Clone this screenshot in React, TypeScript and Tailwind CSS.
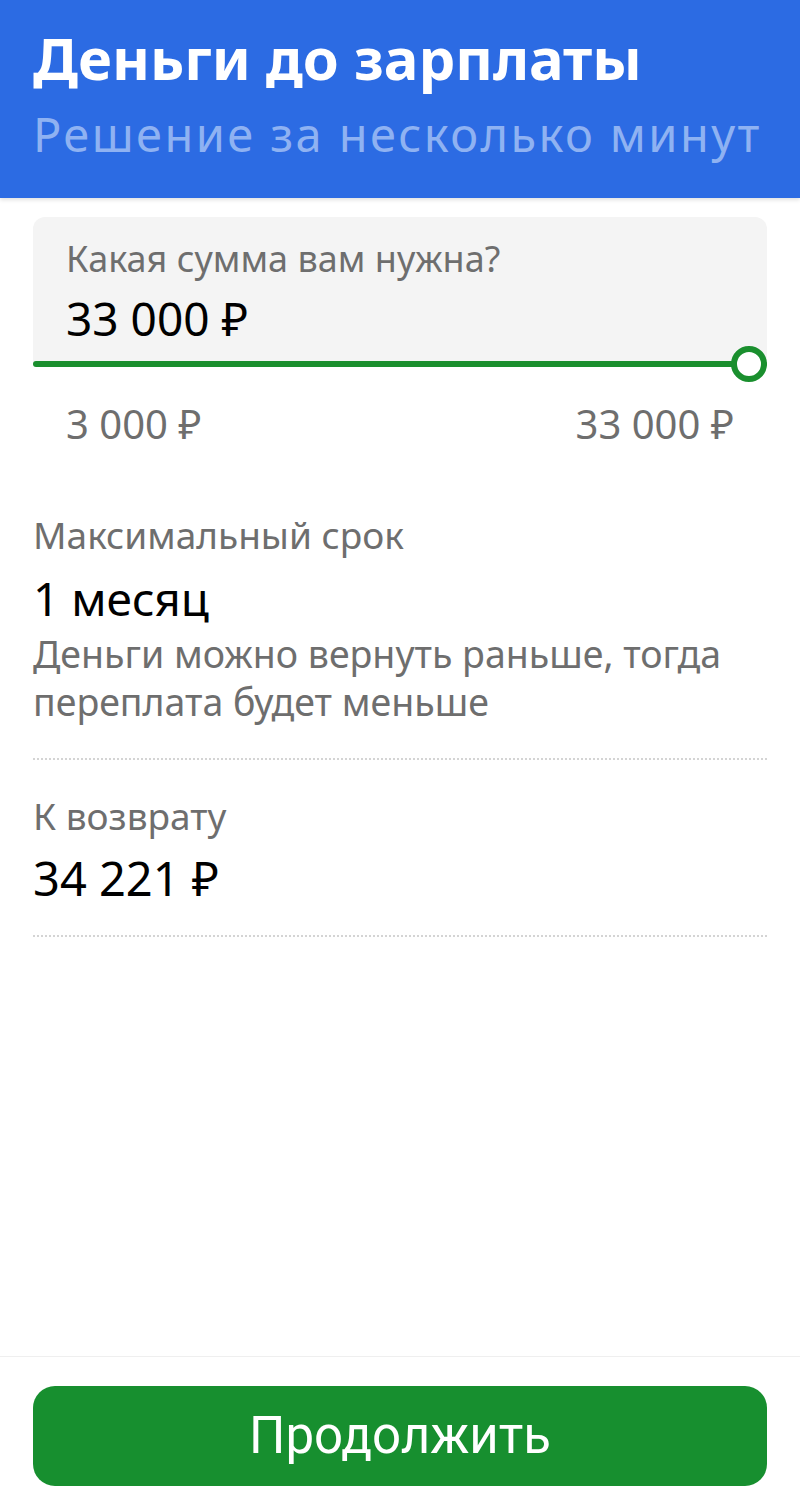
import React from 'react';

const Dotted: React.FC = () => (
    <div className="h-0 border-t-2 border-dotted border-[#d4d4d4]" />
);

const App: React.FC = () => {
    return (
        <div className="w-[800px] h-[1496px] bg-white flex flex-col font-['Noto_Sans',sans-serif]">
            <header className="h-[198px] bg-[#2c6be3] px-[33px] pt-[20px] shadow-[0_2px_4px_rgba(0,0,0,0.12)]">
                <h1 className="text-[58px] leading-[76px] font-bold text-white">Деньги до зарплаты</h1>
                <p className="text-[47px] leading-[60px] tracking-[2.4px] text-[#8fb2f2] mt-[8px]">Решение за несколько минут</p>
            </header>

            <main className="flex-1 px-[33px] pt-[19px]">
                <div className="bg-[#f4f4f4] rounded-t-[12px] px-[33px] pt-[18px] pb-[16px]">
                    <div className="text-[36px] leading-[48px] text-[#6e6e6e]">Какая сумма вам нужна?</div>
                    <div className="text-[46px] leading-[60px] text-black mt-[5px]">33 000 ₽</div>
                </div>
                <div className="relative h-[36px] -mt-[18px] flex items-center">
                    <div className="h-[6px] w-full bg-[#1a8f2e] rounded-full" />
                    <div className="absolute right-0 top-1/2 -translate-y-1/2 w-[36px] h-[36px] rounded-full border-[6px] border-[#1a8f2e] bg-white" />
                </div>
                <div className="flex justify-between px-[33px] mt-[16px] text-[40px] leading-[52px] text-[#6e6e6e]">
                    <span>3 000 ₽</span>
                    <span>33 000 ₽</span>
                </div>

                <div className="mt-[60px]">
                    <div className="text-[37px] leading-[50px] text-[#6e6e6e]">Максимальный срок</div>
                    <div className="text-[46px] leading-[60px] text-black mt-[8px]">1 месяц</div>
                    <div className="text-[37.5px] leading-[48px] text-[#6e6e6e] mt-[2px]">
                        Деньги можно вернуть раньше, тогда переплата будет меньше
                    </div>
                </div>
                <div className="mt-[32px]"><Dotted /></div>

                <div className="mt-[31px]">
                    <div className="text-[37px] leading-[50px] text-[#6e6e6e]">К возврату</div>
                    <div className="text-[47px] leading-[60px] text-black mt-[7px]">34 221 ₽</div>
                </div>
                <div className="mt-[27px]"><Dotted /></div>
            </main>

            <footer className="border-t border-[#efefef] h-[140px] px-[33px] pt-[29px]">
                <button className="w-full h-[100px] rounded-[22px] bg-[#178f2f] text-white text-[51px] font-['Roboto',sans-serif]">
                    Продолжить
                </button>
            </footer>
        </div>
    );
};

export default App;
